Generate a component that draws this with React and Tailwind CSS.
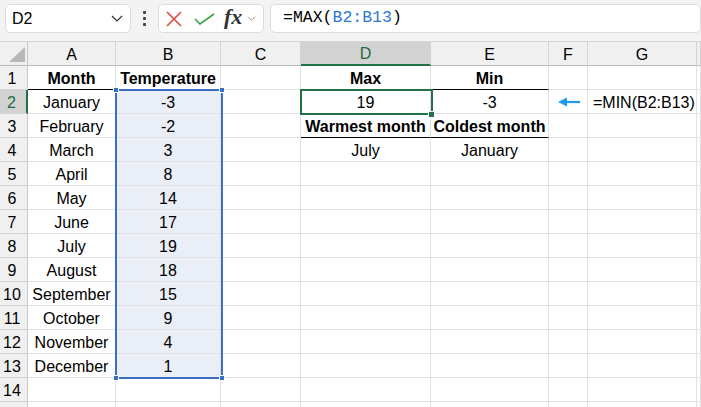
import React from 'react'

const COLS = ['A', 'B', 'C', 'D', 'E', 'F', 'G', 'H']

const MONTHS = [
  ['January', '-3'], ['February', '-2'], ['March', '3'], ['April', '8'],
  ['May', '14'], ['June', '17'], ['July', '19'], ['August', '18'],
  ['September', '15'], ['October', '9'], ['November', '4'], ['December', '1'],
]

// cell content: { 'A1': { v, bold } }
const CELLS = {
  A1: { v: 'Month', bold: true },
  B1: { v: 'Temperature', bold: true },
  D1: { v: 'Max', bold: true },
  E1: { v: 'Min', bold: true },
  D2: { v: '19' },
  E2: { v: '-3' },
  D3: { v: 'Warmest month', bold: true },
  E3: { v: 'Coldest month', bold: true },
  D4: { v: 'July' },
  E4: { v: 'January' },
}
MONTHS.forEach(([m, t], i) => {
  CELLS['A' + (i + 2)] = { v: m }
  CELLS['B' + (i + 2)] = { v: t }
})

const UNDERLINED = ['A1', 'B1', 'D1', 'E1', 'D3', 'E3']

function Chevron({ className }) {
  return (
    <svg className={className} viewBox="0 0 12 7" fill="none" stroke="currentColor" strokeWidth="1.2">
      <path d="M1 1l5 5 5-5" />
    </svg>
  )
}

function Toolbar() {
  return (
    <div className="h-[41px] bg-[#f3f3f3] flex items-start pt-[4px] pl-[5px]">
      {/* Name box */}
      <div className="w-[126px] h-[29px] bg-white border border-[#dcdcdc] rounded-[5px] flex items-center pl-[6px] pr-[7px] shrink-0">
        <span className="flex-1 text-[16px] text-black">D2</span>
        <Chevron className="w-[12px] h-[7px] text-[#333]" />
      </div>
      {/* Dots */}
      <div className="w-[27px] h-[29px] flex flex-col items-center justify-center gap-[3px] shrink-0">
        <span className="w-[3px] h-[3px] bg-[#444] rounded-[1px]" />
        <span className="w-[3px] h-[3px] bg-[#444] rounded-[1px]" />
        <span className="w-[3px] h-[3px] bg-[#444] rounded-[1px]" />
      </div>
      {/* Cancel / enter / fx */}
      <div className="w-[106px] h-[29px] bg-white border border-[#dcdcdc] rounded-[5px] flex items-center pl-[7px] shrink-0">
        <svg className="w-[16px] h-[16px]" viewBox="0 0 16 16" fill="none" stroke="#e5463c" strokeWidth="1.6">
          <path d="M1 1l14 14M15 1L1 15" />
        </svg>
        <svg className="w-[21px] h-[12px] ml-[12px]" viewBox="0 0 21 12" fill="none" stroke="#3aa14a" strokeWidth="1.6">
          <path d="M1 6l5 5L20 1" />
        </svg>
        <span className="ml-[9px] font-['Liberation_Serif'] italic font-bold text-[22px] leading-none text-[#333] mt-[-3px]">fx</span>
        <Chevron className="w-[9px] h-[5px] ml-[5px] text-[#8a8a8a]" />
      </div>
      {/* Formula input */}
      <div className="ml-[6px] flex-1 h-[29px] bg-white border border-[#dcdcdc] rounded-[5px] flex items-center pl-[12px] font-['Liberation_Mono'] text-[16.5px] text-black whitespace-nowrap">
        =MAX(<span className="text-[#2e78d4]">B2:B13</span>)
      </div>
    </div>
  )
}

export default function App() {
  const rows = Array.from({ length: 15 }, (_, i) => i + 1)

  return (
    <div className="w-[701px] h-[407px] overflow-hidden bg-white font-['Liberation_Sans',sans-serif] text-[16px] text-black">
      <Toolbar />

      <div className="relative grid grid-cols-[28px_88px_105px_80px_130px_118px_39px_109px_1fr]">
        {/* Column headers */}
        <div className="h-[25px] bg-[#f0f0f0] border-t border-b border-r border-t-[#d6d6d6] border-b-[#bcbcbc] border-r-[#c8c8c8] relative">
          <svg className="absolute left-[9px] top-[5px] w-[16px] h-[15px]" viewBox="0 0 16 15">
            <path d="M16 0V15H0Z" fill="#b7b7b7" />
          </svg>
        </div>
        {COLS.map(c => (
          <div
            key={c}
            className={`h-[25px] flex items-center justify-center pt-[2px] border-t border-t-[#d6d6d6] border-r border-r-[#d4d4d4] ${
              c === 'D'
                ? 'bg-[#d2d2d2] text-[#1e6b40] border-b-2 border-b-[#217346]'
                : 'bg-[#f0f0f0] border-b border-b-[#bcbcbc]'
            }`}
          >
            {c === 'H' ? '' : c}
          </div>
        ))}

        {/* Rows */}
        {rows.map(r => (
          <React.Fragment key={r}>
            <div
              className={`h-[24px] flex items-center justify-center pr-[3px] pt-[2px] border-b border-b-[#d4d4d4] ${
                r === 2
                  ? 'bg-[#d2d2d2] text-[#1e6b40] border-r-2 border-r-[#217346]'
                  : 'bg-[#f0f0f0] border-r border-r-[#c8c8c8]'
              }`}
            >
              {r < 15 ? r : ''}
            </div>
            {COLS.map(c => {
              const id = c + r
              const cell = CELLS[id]
              const shaded = c === 'B' && r >= 2 && r <= 13
              const under = UNDERLINED.includes(id)
              return (
                <div
                  key={id}
                  className={`h-[24px] flex items-center pt-[2px] whitespace-nowrap border-r border-r-[#e1e1e1] border-b ${
                    under ? 'border-b-black' : 'border-b-[#e1e1e1]'
                  } ${shaded ? 'bg-[#eaeef7]' : ''} ${
                    id === 'G2' ? 'justify-start pl-[5px]' : 'justify-center'
                  } ${cell && cell.bold ? 'font-bold' : ''}`}
                >
                  {cell && cell.v}
                  {id === 'F2' && (
                    <svg className="w-[22px] h-[10px] mt-[-2px] ml-[2px]" viewBox="0 0 22 10">
                      <path d="M22 5H6" stroke="#1e9cf0" strokeWidth="2.2" />
                      <path d="M0 5L9 0.5V9.5Z" fill="#1e9cf0" />
                    </svg>
                  )}
                  {id === 'G2' && '=MIN(B2:B13)'}
                </div>
              )
            })}
          </React.Fragment>
        ))}

        {/* Selection B2:B13 */}
        <div className="absolute left-[115px] top-[48px] w-[108px] h-[290px] border-2 border-[#3a6fc6] pointer-events-none" />
        <div className="absolute left-[113px] top-[46px] w-[6px] h-[6px] bg-[#3a6fc6] border border-white" />
        <div className="absolute left-[219px] top-[46px] w-[6px] h-[6px] bg-[#3a6fc6] border border-white" />
        <div className="absolute left-[113px] top-[334px] w-[6px] h-[6px] bg-[#3a6fc6] border border-white" />
        <div className="absolute left-[219px] top-[334px] w-[6px] h-[6px] bg-[#3a6fc6] border border-white" />

        {/* Active cell D2 */}
        <div className="absolute left-[300px] top-[48px] w-[133px] h-[26px] border-2 border-[#217346] pointer-events-none" />
        <div className="absolute left-[428px] top-[70px] w-[7px] h-[7px] bg-[#217346] border border-white" />
      </div>
    </div>
  )
}
